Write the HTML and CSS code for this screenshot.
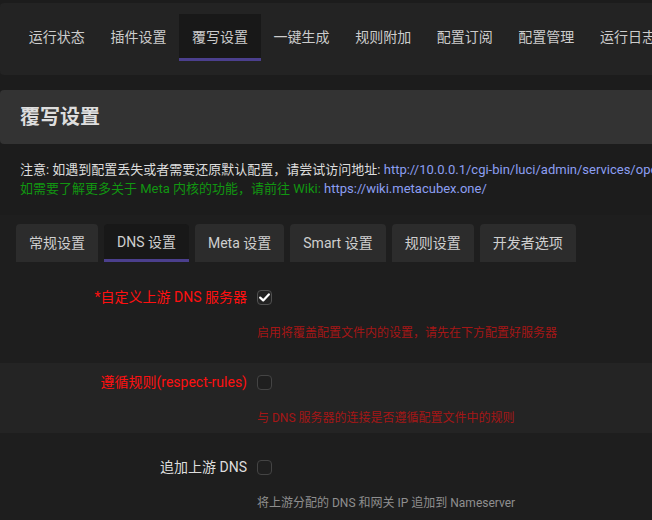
FILE: index.html
```html
<!DOCTYPE html>
<html lang="zh-CN">
<head>
    <meta charset="UTF-8">
    <meta name="viewport" content="width=device-width, initial-scale=1.0">
    <title>覆写设置</title>
    <link rel="stylesheet" href="styles.css">
</head>
<body>
<nav class="menu">
    <a class="menu-item">运行状态</a>
    <a class="menu-item">插件设置</a>
    <a class="menu-item active">覆写设置</a>
    <a class="menu-item">一键生成</a>
    <a class="menu-item">规则附加</a>
    <a class="menu-item">配置订阅</a>
    <a class="menu-item">配置管理</a>
    <a class="menu-item">运行日志</a>
</nav>

<h2 class="page-title">覆写设置</h2>

<div class="notice">
    <div>注意: 如遇到配置丢失或者需要还原默认配置，请尝试访问地址: <a class="link">http://10.0.0.1/cgi-bin/luci/admin/services/openclash/settings</a></div>
    <div class="green">如需要了解更多关于 Meta 内核的功能，请前往 Wiki: <a class="link">https://wiki.metacubex.one/</a></div>
</div>

<div class="tabs">
    <a class="tab">常规设置</a>
    <a class="tab active">DNS 设置</a>
    <a class="tab">Meta 设置</a>
    <a class="tab">Smart 设置</a>
    <a class="tab">规则设置</a>
    <a class="tab">开发者选项</a>
</div>

<div class="section">
    <div class="row">
        <label class="row-label required">*自定义上游 DNS 服务器</label>
        <div class="row-field">
            <span class="checkbox checked">
                <svg width="11" height="9" viewBox="0 0 11 9"><path d="M1.2 4.6 L4.2 7.4 L9.8 1.4" fill="none" stroke="#fff" stroke-width="2.2" stroke-linecap="round" stroke-linejoin="round"/></svg>
            </span>
            <div class="desc warn">启用将覆盖配置文件内的设置，请先在下方配置好服务器</div>
        </div>
    </div>
    <div class="row">
        <label class="row-label required">遵循规则(respect-rules)</label>
        <div class="row-field">
            <span class="checkbox"></span>
            <div class="desc warn">与 DNS 服务器的连接是否遵循配置文件中的规则</div>
        </div>
    </div>
    <div class="row">
        <label class="row-label">追加上游 DNS</label>
        <div class="row-field">
            <span class="checkbox"></span>
            <div class="desc">将上游分配的 DNS 和网关 IP 追加到 Nameserver</div>
        </div>
    </div>
</div>
</body>
</html>
```

FILE: styles.css
```css
body {
    font-family: 'Roboto', 'Noto Sans CJK SC', sans-serif;
    background-color: #1c1c1c;
    color: #dddddd;
    margin: 0;
    padding: 0;
    overflow: hidden;
    white-space: nowrap;
}

.menu {
    display: flex;
    margin-top: 3px;
    padding: 11px 16px 0;
    height: 61px;
    background-color: #232323;
    border-radius: 4px;
    width: 900px;
}

.menu-item {
    display: block;
    width: 81.6px;
    box-sizing: border-box;
    text-align: center;
    height: 47px;
    line-height: 47px;
    font-size: 14px;
    color: #cccccc;
}

.menu-item.active {
    background-color: #181818;
    border-bottom: 3px solid #4b3f8d;
}

.page-title {
    margin: 15px 0 0;
    height: 54px;
    line-height: 54px;
    padding-left: 20px;
    font-size: 20px;
    font-weight: bold;
    color: #dedede;
    background-color: #333333;
    border-radius: 4px 0 0 4px;
}

.notice {
    padding: 16px 20px 0;
    height: 55px;
    font-size: 13px;
    line-height: 19px;
}

.green {
    color: #119511;
}

.link {
    color: #8c9ff2;
}

.tabs {
    display: flex;
    gap: 6px;
    padding: 9px 16px 0;
    background-color: #1e1e1e;
}

.tab {
    display: block;
    height: 38px;
    line-height: 38px;
    padding: 0 13px;
    font-size: 14px;
    color: #cfcfcf;
    background-color: #2c2c2c;
    border-radius: 4px 4px 0 0;
}

.tab.active {
    background-color: #181818;
    height: 35px;
    line-height: 36px;
    border-bottom: 3px solid #4b3f8d;
}

.section {
    background-color: #1e1e1e;
    padding-top: 16px;
    height: 242px;
}

.row {
    display: grid;
    grid-template-columns: 247px 1fr;
    height: 70px;
    margin-bottom: 15px;
    padding-top: 12px;
    box-sizing: border-box;
}

.row:nth-child(even) {
    background-color: #242424;
}

.row-label {
    text-align: right;
    font-size: 14px;
    line-height: 15px;
    color: #dddddd;
}

.row-label.required {
    color: #ff1010;
}

.row-field {
    padding-left: 10px;
}

.checkbox {
    display: flex;
    align-items: center;
    justify-content: center;
    width: 15px;
    height: 15px;
    box-sizing: border-box;
    border: 1px solid #444444;
    border-radius: 4px;
    background-color: #1f1f1f;
}

.checkbox.checked {
    border-color: #505050;
    background-color: #222222;
}

.desc {
    margin-top: 19px;
    font-size: 12px;
    line-height: 18px;
    color: #8f8f8f;
}

.desc.warn {
    color: #a51616;
}
```
